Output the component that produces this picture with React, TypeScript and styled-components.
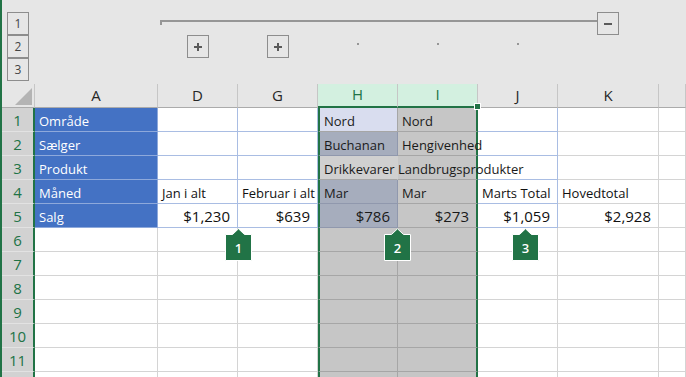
import styled, { createGlobalStyle } from "styled-components"

const GREEN = "#217346"
const TEMPLATE = "33px 123px 80px 80px 80px 80px 80px 101px 1fr"

const GlobalStyle = createGlobalStyle`
  html, body {
    margin: 0;
    padding: 0;
    background: #e6e6e6;
  }
  body {
    font-family: "Open Sans", "Noto Sans", sans-serif;
  }
`

type Tone = "plain" | "pivot" | "field" | "selLight" | "selBlue" | "selPale" | "sel"

const tones: Record<Tone, { bg: string; line: string; color: string }> = {
  plain: { bg: "#ffffff", line: "#d4d4d4", color: "#111" },
  pivot: { bg: "#ffffff", line: "#a9bde3", color: "#111" },
  field: { bg: "#4472c4", line: "#8ea9db", color: "#ffffff" },
  selLight: { bg: "#d9ddef", line: "#a6a6a6", color: "#1a1a1a" },
  selBlue: { bg: "#a6adbd", line: "#9098ad", color: "#1a1a1a" },
  selPale: { bg: "#d0d0d0", line: "#a6a6a6", color: "#1a1a1a" },
  sel: { bg: "#c6c6c6", line: "#a6a6a6", color: "#1a1a1a" },
}

const Page = styled.div`
  width: 686px;
  height: 377px;
  overflow: hidden;
  box-sizing: border-box;
  border-left: 2px solid ${GREEN};
  background: #e6e6e6;
  display: flex;
  flex-direction: column;
`

const Outline = styled.div`
  display: grid;
  grid-template-columns: ${TEMPLATE};
  grid-template-rows: 12px 23px 23px 26px;
  flex-shrink: 0;
`

const LevelStack = styled.div`
  grid-column: 1;
  grid-row: 2 / 5;
  display: flex;
  flex-direction: column;
  padding-left: 5px;
`

const LevelButton = styled.div`
  width: 22px;
  height: 23px;
  box-sizing: border-box;
  border: 1px solid #8d8d8d;
  display: flex;
  align-items: center;
  justify-content: center;
  font-size: 12px;
  color: #444;
`

const Bracket = styled.div`
  grid-column: 3 / 9;
  grid-row: 2;
  display: flex;
  align-items: flex-start;
  padding: 0 40px 0 2px;
`

const BracketLine = styled.div`
  flex: 1;
  margin-top: 8px;
  height: 5px;
  box-sizing: border-box;
  border-top: 2px solid #969696;
  border-left: 2px solid #969696;
`

const ToggleBox = styled.div`
  width: 22px;
  height: 23px;
  box-sizing: border-box;
  border: 1px solid #8d8d8d;
  display: flex;
  align-items: center;
  justify-content: center;
`

const MarkerSlot = styled.div<{ $col: number }>`
  grid-column: ${(p) => p.$col};
  grid-row: 3;
  display: flex;
  justify-content: center;
  align-items: flex-start;
`

const Dot = styled.div`
  width: 2px;
  height: 2px;
  margin-top: 8px;
  background: #969696;
`

const Sheet = styled.div`
  position: relative;
  display: grid;
  grid-template-columns: ${TEMPLATE};
  grid-auto-rows: 24px;
`

const Corner = styled.div`
  box-sizing: border-box;
  border-right: 1px solid #c6c6c6;
  border-bottom: 1px solid #ababab;
  display: flex;
  align-items: flex-end;
  justify-content: flex-end;
  padding: 0 2px 2px 0;
`

const ColHead = styled.div<{ $selected?: boolean }>`
  position: relative;
  box-sizing: border-box;
  background: ${(p) => (p.$selected ? "#d3f0e0" : "#e6e6e6")};
  color: ${(p) => (p.$selected ? GREEN : "#262626")};
  border-right: 1px solid #c6c6c6;
  border-bottom: ${(p) => (p.$selected ? `2px solid ${GREEN}` : "1px solid #ababab")};
  display: flex;
  align-items: flex-end;
  justify-content: center;
  padding-bottom: 4px;
  font-size: 15px;
  line-height: 1;
`

const Handle = styled.span`
  position: absolute;
  right: -4px;
  bottom: -4px;
  width: 5px;
  height: 5px;
  background: ${GREEN};
  border: 1px solid #fff;
  z-index: 3;
`

const RowHead = styled.div`
  box-sizing: border-box;
  background: #d2d2d2;
  color: ${GREEN};
  border-right: 2px solid ${GREEN};
  border-bottom: 1px solid #e2e2e2;
  display: flex;
  align-items: flex-end;
  justify-content: center;
  padding-bottom: 3px;
  font-size: 15px;
  line-height: 1;
`

const Cell = styled.div<{
  $tone: Tone
  $num?: boolean
  $selLeft?: boolean
  $selRight?: boolean
  $joined?: boolean
}>`
  box-sizing: border-box;
  min-width: 0;
  background: ${(p) => tones[p.$tone].bg};
  color: ${(p) => tones[p.$tone].color};
  border-right: ${(p) =>
    p.$selRight
      ? `2px solid ${GREEN}`
      : `1px solid ${p.$joined ? tones[p.$tone].bg : tones[p.$tone].line}`};
  border-bottom: 1px solid ${(p) => tones[p.$tone].line};
  border-left: ${(p) => (p.$selLeft ? `2px solid ${GREEN}` : "none")};
  display: flex;
  align-items: flex-end;
  justify-content: ${(p) => (p.$num ? "flex-end" : "flex-start")};
  padding: ${(p) => (p.$num ? "0 7px 3px 0" : "0 0 3px 4px")};
  font-size: ${(p) => (p.$num ? "15px" : "13px")};
  line-height: 1;
  white-space: nowrap;
  overflow: visible;
`

const Spill = styled.span`
  position: relative;
  z-index: 2;
`

const CalloutWrap = styled.div<{ $left: number }>`
  position: absolute;
  top: 144px;
  left: ${(p) => p.$left}px;
  width: 27px;
  height: 33px;
  z-index: 4;
  & > svg {
    position: absolute;
    inset: 0;
  }
`

const CalloutLabel = styled.span`
  position: relative;
  display: flex;
  align-items: center;
  justify-content: center;
  height: 27px;
  margin-top: 6px;
  color: #fff;
  font-size: 13px;
  font-weight: 600;
`

const columns = ["A", "D", "G", "H", "I", "J", "K", ""]

const data: Record<number, Record<string, string>> = {
  1: { A: "Område", H: "Nord", I: "Nord" },
  2: { A: "Sælger", H: "Buchanan", I: "Hengivenhed" },
  3: { A: "Produkt", H: "Drikkevarer Landbrugsprodukter" },
  4: { A: "Måned", D: "Jan i alt", G: "Februar i alt", H: "Mar", I: "Mar", J: "Marts Total", K: "Hovedtotal" },
  5: { A: "Salg", D: "$1,230", G: "$639", H: "$786", I: "$273", J: "$1,059", K: "$2,928" },
}

// cells whose text runs on into the next cells
const spills = ["2I", "3H"]

function toneFor(row: number, col: string): Tone {
  if (col === "H") {
    if (row === 1) return "selLight"
    if (row === 2 || row === 4 || row === 5) return "selBlue"
    if (row === 3) return "selPale"
    return "sel"
  }
  if (col === "I") return "sel"
  if (row <= 5) {
    if (col === "A") return "field"
    if (col === "D" || col === "G" || col === "J") return "pivot"
  }
  return "plain"
}

const Plus = () => (
  <svg width="8" height="8" viewBox="0 0 8 8">
    <path d="M4 0v8M0 4h8" stroke="#5a5a5a" strokeWidth="2" />
  </svg>
)

const Minus = () => (
  <svg width="8" height="8" viewBox="0 0 8 8">
    <path d="M0 4h8" stroke="#5a5a5a" strokeWidth="2" />
  </svg>
)

const Callout = ({ left, n }: { left: number; n: number }) => (
  <CalloutWrap $left={left}>
    <svg width="27" height="33" viewBox="0 0 27 33">
      <path d="M0.5 6.5H7.5L13.5 0.8L19.5 6.5H26.5V32.5H0.5Z" fill={GREEN} stroke="#fff" strokeWidth="1" />
    </svg>
    <CalloutLabel>{n}</CalloutLabel>
  </CalloutWrap>
)

const rows = Array.from({ length: 12 }, (_, i) => i + 1)

const App = () => {
  return (
    <Page>
      <GlobalStyle />
      <Outline>
        <LevelStack>
          <LevelButton>1</LevelButton>
          <LevelButton>2</LevelButton>
          <LevelButton>3</LevelButton>
        </LevelStack>
        <Bracket>
          <BracketLine />
          <ToggleBox>
            <Minus />
          </ToggleBox>
        </Bracket>
        <MarkerSlot $col={3}>
          <ToggleBox>
            <Plus />
          </ToggleBox>
        </MarkerSlot>
        <MarkerSlot $col={4}>
          <ToggleBox>
            <Plus />
          </ToggleBox>
        </MarkerSlot>
        {[5, 6, 7].map((c) => (
          <MarkerSlot key={c} $col={c}>
            <Dot />
          </MarkerSlot>
        ))}
      </Outline>

      <Sheet>
        <Corner>
          <svg width="17" height="17" viewBox="0 0 17 17">
            <path d="M17 0V17H0Z" fill="#b4b4b4" />
          </svg>
        </Corner>
        {columns.map((c) => (
          <ColHead key={`head-${c || "L"}`} $selected={c === "H" || c === "I"}>
            {c}
            {c === "I" && <Handle />}
          </ColHead>
        ))}

        {rows.map((r) => [
          <RowHead key={`rh-${r}`}>{r <= 11 ? r : ""}</RowHead>,
          ...columns.map((c) => {
            const value = data[r]?.[c] ?? ""
            const tone = toneFor(r, c)
            return (
              <Cell
                key={`cell-${r}-${c || "L"}`}
                $tone={tone}
                $num={value.startsWith("$")}
                $selLeft={c === "H"}
                $selRight={c === "I"}
                $joined={r === 3 && c === "H"}
              >
                {spills.includes(`${r}${c}`) ? <Spill>{value}</Spill> : value}
              </Cell>
            )
          }),
        ])}

        <Callout left={223} n={1} />
        <Callout left={382} n={2} />
        <Callout left={510} n={3} />
      </Sheet>
    </Page>
  )
}

export default App
